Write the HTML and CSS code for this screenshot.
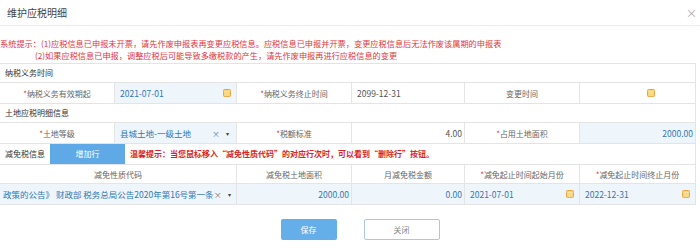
FILE: index.html
```html
<!DOCTYPE html>
<html lang="zh-CN">
<head>
    <meta charset="UTF-8">
    <title>维护应税明细</title>
    <link rel="stylesheet" href="styles.css">
</head>
<body>
<div class="dialog">
    <div class="dlg-head">
        <span class="dlg-title">维护应税明细</span>
        <span class="dlg-close">×</span>
    </div>
    <div class="notice">
        <div>系统提示：(1)应税信息已申报未开票，请先作废申报表再变更应税信息。应税信息已申报并开票，变更应税信息后无法作废该属期的申报表</div>
        <div class="notice-2">(2)如果应税信息已申报，调整应税后可能导致多缴税款的产生，请先作废申报再进行应税信息的变更</div>
    </div>
    <div class="form">
        <div class="sec">纳税义务时间</div>
        <div class="row">
            <div class="cell label"><i>*</i>纳税义务有效期起</div>
            <div class="cell input edit">
                <span class="val">2021-07-01</span>
                <svg class="cal" viewBox="0 0 8 8"><rect x="0.5" y="0.5" width="7" height="7" rx="1" fill="#f7d47a" stroke="#eaa43c"/><path d="M0.5 2.5h7M3 2.5v5M5 2.5v5" stroke="#fbe6b0" stroke-width="0.6"/></svg>
            </div>
            <div class="cell label"><i>*</i>纳税义务终止时间</div>
            <div class="cell input"><span class="val plain">2099-12-31</span></div>
            <div class="cell label">变更时间</div>
            <div class="cell input">
                <span class="val"></span>
                <svg class="cal cal-mid" viewBox="0 0 8 8"><rect x="0.5" y="0.5" width="7" height="7" rx="1" fill="#f7d47a" stroke="#eaa43c"/><path d="M0.5 2.5h7M3 2.5v5M5 2.5v5" stroke="#fbe6b0" stroke-width="0.6"/></svg>
            </div>
        </div>
        <div class="sec">土地应税明细信息</div>
        <div class="row">
            <div class="cell label"><i>*</i>土地等级</div>
            <div class="cell input edit">
                <span class="val">县城土地-一级土地</span>
                <span class="clear">×</span><span class="caret">▾</span>
            </div>
            <div class="cell label"><i>*</i>税额标准</div>
            <div class="cell input num"><span class="val plain">4.00</span></div>
            <div class="cell label"><i>*</i>占用土地面积</div>
            <div class="cell input edit num"><span class="val">2000.00</span></div>
        </div>
        <div class="sec tools">
            <span>减免税信息</span>
            <button class="btn-add">增加行</button>
            <span class="tip">温馨提示：当您鼠标移入“减免性质代码”的对应行次时，可以看到“删除行”按钮。</span>
        </div>
        <div class="row head">
            <div class="cell wide">减免性质代码</div>
            <div class="cell">减免税土地面积</div>
            <div class="cell">月减免税金额</div>
            <div class="cell"><i>*</i>减免起止时间起始月份</div>
            <div class="cell"><i>*</i>减免起止时间终止月份</div>
        </div>
        <div class="row data">
            <div class="cell input edit wide">
                <span class="val">政策的公告》 财政部 税务总局公告2020年第16号第一条</span>
                <span class="clear">×</span><span class="caret">▾</span>
            </div>
            <div class="cell input edit num"><span class="val">2000.00</span></div>
            <div class="cell input edit num"><span class="val">0.00</span></div>
            <div class="cell input edit">
                <span class="val">2021-07-01</span>
                <svg class="cal" viewBox="0 0 8 8"><rect x="0.5" y="0.5" width="7" height="7" rx="1" fill="#f7d47a" stroke="#eaa43c"/><path d="M0.5 2.5h7M3 2.5v5M5 2.5v5" stroke="#fbe6b0" stroke-width="0.6"/></svg>
            </div>
            <div class="cell input edit">
                <span class="val">2022-12-31</span>
                <svg class="cal" viewBox="0 0 8 8"><rect x="0.5" y="0.5" width="7" height="7" rx="1" fill="#f7d47a" stroke="#eaa43c"/><path d="M0.5 2.5h7M3 2.5v5M5 2.5v5" stroke="#fbe6b0" stroke-width="0.6"/></svg>
            </div>
        </div>
    </div>
    <div class="actions">
        <button class="btn-save">保存</button>
        <button class="btn-close">关闭</button>
    </div>
</div>
</body>
</html>
```

FILE: styles.css
```css
body {
    margin: 0;
    font-family: "Noto Sans CJK SC", "Noto Sans", sans-serif;
    font-size: 8px;
    color: #666;
    background: #fff;
}
.dialog {
    width: 700px;
}
.dlg-head {
    height: 25px;
    border-bottom: 1px solid #ebebeb;
    display: flex;
    align-items: center;
    justify-content: space-between;
    padding: 0 3px 0 7px;
}
.dlg-title {
    font-size: 10px;
    color: #444;
}
.dlg-close {
    font-size: 11px;
    color: #aaa;
}
.notice {
    height: 37px;
    box-sizing: border-box;
    padding-top: 11px;
    color: #e0363c;
    font-size: 8.2px;
    line-height: 12px;
    white-space: nowrap;
}
.notice-2 {
    padding-left: 35px;
}
.form {
    width: 695px;
    border-top: 1px solid #e4e4e4;
    border-right: 1px solid #e4e4e4;
}
.sec {
    height: 18px;
    line-height: 18px;
    padding-left: 5px;
    color: #333;
    border-bottom: 1px solid #e4e4e4;
}
.row {
    display: grid;
    grid-template-columns: 115px 122px 115px 113px 115px 115px;
    height: 20px;
    border-bottom: 1px solid #e4e4e4;
}
.cell {
    display: flex;
    align-items: center;
    border-right: 1px solid #e4e4e4;
    overflow: hidden;
    white-space: nowrap;
}
.cell:last-child {
    border-right: none;
}
.cell i {
    font-style: normal;
    color: #e0363c;
}
.label {
    justify-content: center;
}
.input {
    padding: 0 5px;
    color: #555;
}
.edit {
    background: #eef5fb;
}
.val {
    flex: 1;
    color: #3378b4;
    font-size: 8.5px;
}
.val.plain {
    color: #555;
}
.num .val {
    text-align: right;
}
.num {
    padding-right: 2px;
}
.cal {
    width: 8px;
    height: 8px;
    flex: none;
}
.cal-mid {
    margin-right: 35px;
}
.clear {
    color: #777;
    margin-right: 6px;
}
.caret {
    color: #444;
    font-size: 6px;
    margin-right: 2px;
}
.tools {
    height: 20px;
    line-height: 20px;
    display: flex;
    align-items: center;
}
.btn-add {
    width: 75px;
    height: 20px;
    margin-left: 5px;
    border: none;
    background: #5ea9e6;
    color: #fff;
    font: inherit;
    padding: 0;
}
.tip {
    margin-left: 5px;
    color: #d82323;
    font-weight: bold;
}
.head {
    height: 18px;
}
.head .cell {
    justify-content: center;
}
.wide {
    grid-column: span 2;
}
.data .wide {
    padding-left: 3px;
}
.actions {
    display: flex;
    justify-content: center;
    gap: 27px;
    margin-top: 14px;
    padding-right: 40px;
    padding-left: 60px;
}
.btn-save, .btn-close {
    height: 21px;
    font: inherit;
    padding: 0;
    border-radius: 2px;
}
.btn-save {
    width: 56px;
    border: none;
    background: #64aeea;
    color: #fff;
}
.btn-close {
    width: 76px;
    border: 1px solid #a7c9e5;
    background: #fff;
    color: #888;
}
```
